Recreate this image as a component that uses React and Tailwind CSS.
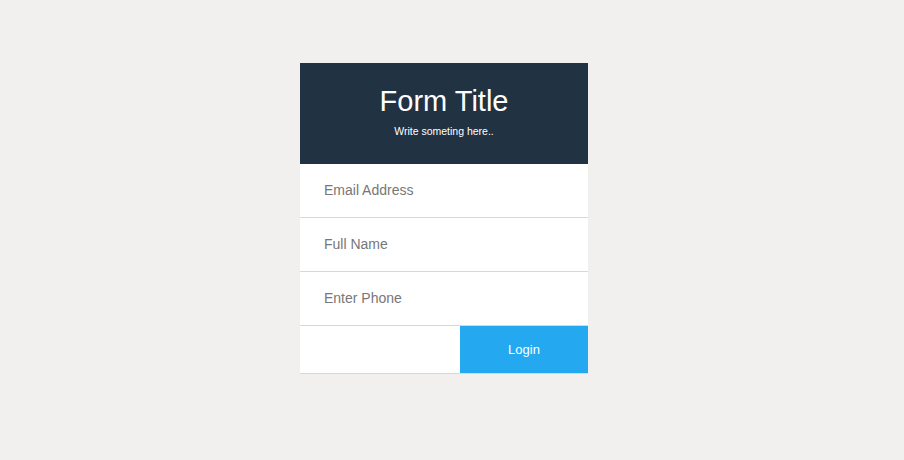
const App = () => {
  return (
    <div
      className="min-h-[460px] w-full bg-[#f1f0ee] flex justify-center pt-[63px] pr-4"
      style={{ fontFamily: '"Liberation Sans", Arial, sans-serif' }}
    >
      <form className="w-[288px] h-fit bg-white">
        <div className="h-[101px] bg-[#213243] flex flex-col items-center text-white">
          <h1 className="text-[29px] leading-none mt-[24px]">Form Title</h1>
          <p className="text-[10.5px] leading-none mt-[10px]">Write someting here..</p>
        </div>
        <input
          type="email"
          placeholder="Email Address"
          className="block w-full h-[54px] px-6 pb-[2px] text-sm text-[#777] placeholder:text-[#777] border-b border-[#d8d8d8] outline-none"
        />
        <input
          type="text"
          placeholder="Full Name"
          className="block w-full h-[54px] px-6 pb-[2px] text-sm text-[#777] placeholder:text-[#777] border-b border-[#d8d8d8] outline-none"
        />
        <input
          type="text"
          placeholder="Enter Phone"
          className="block w-full h-[54px] px-6 pb-[2px] text-sm text-[#777] placeholder:text-[#777] border-b border-[#d8d8d8] outline-none"
        />
        <div className="flex justify-end border-b border-[#d8d8d8]">
          <button
            type="submit"
            className="w-[128px] h-[47px] bg-[#24a8f0] text-white text-[13px]"
          >
            Login
          </button>
        </div>
      </form>
    </div>
  );
};

export default App;
